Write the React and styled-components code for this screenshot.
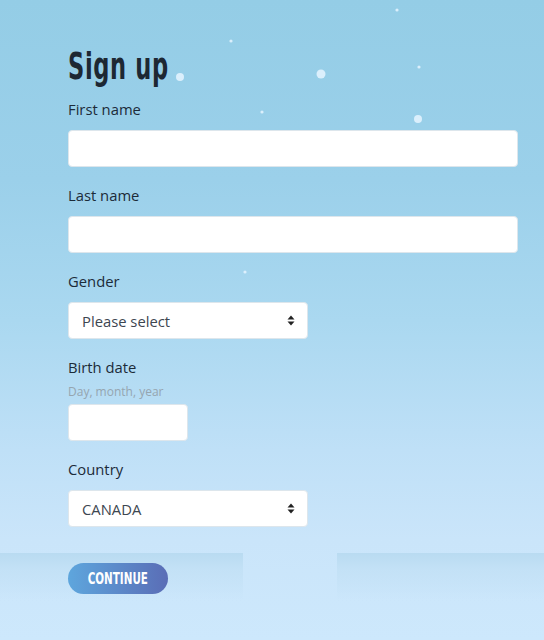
import styled, { createGlobalStyle } from "styled-components";

const GlobalStyle = createGlobalStyle`
  html, body {
    margin: 0;
    padding: 0;
    height: 100%;
  }
  body {
    font-family: "Open Sans", "Noto Sans", sans-serif;
  }
`;

const flakes = [
  { x: 180, y: 77, r: 4 },
  { x: 231, y: 41, r: 1.6 },
  { x: 321, y: 74, r: 4.5 },
  { x: 397, y: 10, r: 1.6 },
  { x: 419, y: 67, r: 1.6 },
  { x: 418, y: 119, r: 4 },
  { x: 262, y: 112, r: 1.6 },
  { x: 245, y: 272, r: 1.6 },
];

const App = () => {
  return (
    <Page>
      <GlobalStyle />
      <Snow width="544" height="640" viewBox="0 0 544 640">
        {flakes.map((f, i) => (
          <circle key={i} cx={f.x} cy={f.y} r={f.r} fill="#e6f4ff" opacity="0.85" />
        ))}
      </Snow>
      <Ground>
        <Strip $width="243px" />
        <Gap />
        <Strip />
      </Ground>
      <Form>
        <Title>Sign up</Title>

        <Field>
          <Label>First name</Label>
          <TextInput type="text" />
        </Field>

        <Field>
          <Label>Last name</Label>
          <TextInput type="text" />
        </Field>

        <Field>
          <Label>Gender</Label>
          <SelectBox>
            <span>Please select</span>
            <Arrows />
          </SelectBox>
        </Field>

        <Field>
          <Label $tight>Birth date</Label>
          <Hint>Day, month, year</Hint>
          <TextInput type="text" $width="120px" />
        </Field>

        <Field>
          <Label>Country</Label>
          <SelectBox>
            <span>CANADA</span>
            <Arrows />
          </SelectBox>
        </Field>

        <Button>
          <Narrow>CONTINUE</Narrow>
        </Button>
      </Form>
    </Page>
  );
};

const Arrows = () => (
  <svg width="8" height="11" viewBox="0 0 8 11">
    <path d="M4 0.5 L7.5 4.5 H0.5 Z" fill="#222" />
    <path d="M4 10.5 L7.5 6.5 H0.5 Z" fill="#222" />
  </svg>
);

const Page = styled.div`
  position: relative;
  min-height: 640px;
  overflow: hidden;
  background: linear-gradient(
    to bottom,
    #94cde6 0px,
    #9bd0ea 180px,
    #aad8f0 320px,
    #bfe0f7 450px,
    #cae5fa 540px,
    #cde8fc 640px
  );
`;

const Snow = styled.svg`
  position: absolute;
  top: 0;
  left: 0;
  pointer-events: none;
`;

const Ground = styled.div`
  position: absolute;
  top: 553px;
  left: 0;
  right: 0;
  height: 50px;
  display: flex;
  pointer-events: none;
`;

const Strip = styled.div`
  flex: ${({ $width }) => ($width ? `0 0 ${$width}` : "1")};
  background: linear-gradient(to bottom, #b9dbf1 0px, #c3e1f6 16px, rgba(203, 230, 251, 0) 48px);
`;

const Gap = styled.div`
  width: 94px;
`;

const Form = styled.div`
  position: relative;
  padding: 44px 26px 40px 68px;
  display: flex;
  flex-direction: column;
`;

const Title = styled.h1`
  margin: 0 0 11px;
  font-family: "DejaVu Sans Condensed", "DejaVu Sans", sans-serif;
  font-stretch: condensed;
  font-weight: 700;
  font-size: 38px;
  line-height: 44px;
  color: #1d2833;
  transform: scaleX(0.66);
  transform-origin: left center;
  letter-spacing: 1px;
`;

const Field = styled.div`
  display: flex;
  flex-direction: column;
  align-items: flex-start;
  margin-bottom: 18px;
`;

const Label = styled.label`
  font-size: 14.8px;
  line-height: 20px;
  color: #1c2b39;
  margin-bottom: ${({ $tight }) => ($tight ? "7px" : "11px")};
`;

const Hint = styled.span`
  font-size: 12px;
  line-height: 16px;
  color: #95a5b0;
  margin-bottom: 4px;
`;

const TextInput = styled.input`
  box-sizing: border-box;
  width: ${({ $width }) => $width || "450px"};
  height: 37px;
  border: 1px solid #dde6ec;
  border-radius: 4px;
  background: #fff;
  outline: none;
  padding: 0 12px;
  font-family: inherit;
`;

const SelectBox = styled.div`
  box-sizing: border-box;
  width: 240px;
  height: 37px;
  border: 1px solid #dde6ec;
  border-radius: 4px;
  background: #fff;
  display: flex;
  align-items: center;
  justify-content: space-between;
  padding: 0 12px 0 13px;
  font-size: 14.8px;
  color: #3d4650;
`;

const Button = styled.button`
  margin-top: 18px;
  width: 100px;
  height: 31px;
  border: none;
  border-radius: 16px;
  background: linear-gradient(to right, #5ea6dd, #5a6db6);
  color: #fff;
  cursor: pointer;
  padding: 0;
  display: flex;
  align-items: center;
  justify-content: center;
`;

const Narrow = styled.span`
  display: inline-block;
  font-family: "DejaVu Sans Condensed", "DejaVu Sans", sans-serif;
  font-stretch: condensed;
  font-weight: 700;
  font-size: 16px;
  transform: scaleX(0.72);
`;

export default App;
